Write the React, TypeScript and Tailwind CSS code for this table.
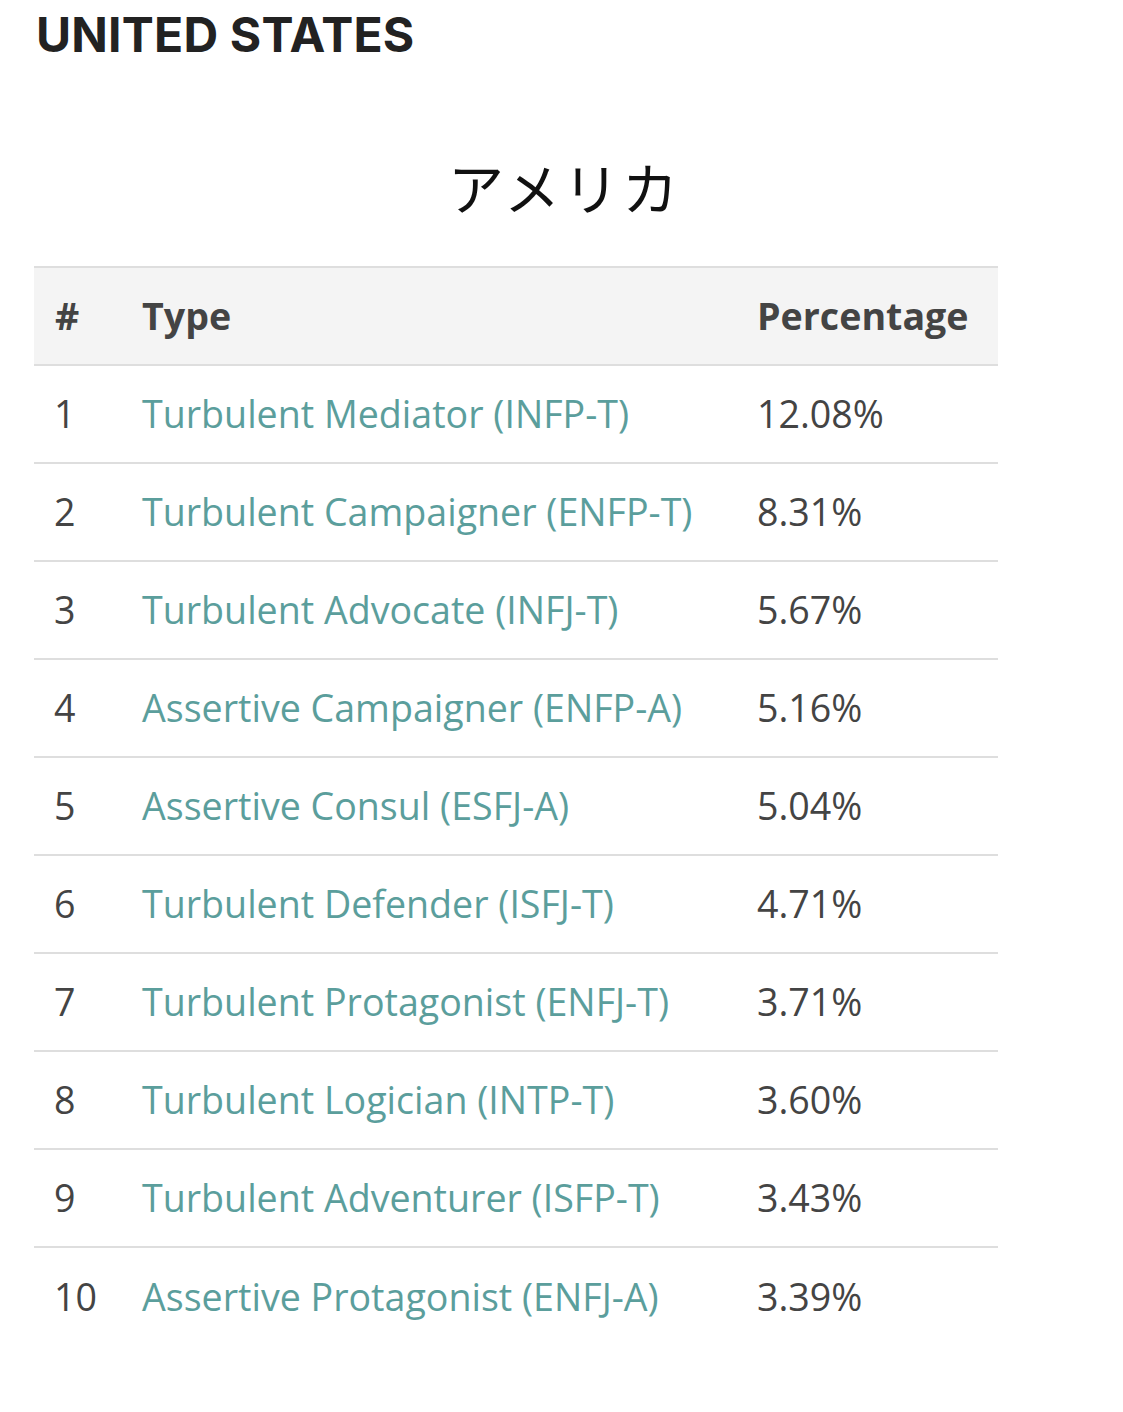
import React from "react";

const rows: [string, string][] = [
  ["Turbulent Mediator (INFP-T)", "12.08%"],
  ["Turbulent Campaigner (ENFP-T)", "8.31%"],
  ["Turbulent Advocate (INFJ-T)", "5.67%"],
  ["Assertive Campaigner (ENFP-A)", "5.16%"],
  ["Assertive Consul (ESFJ-A)", "5.04%"],
  ["Turbulent Defender (ISFJ-T)", "4.71%"],
  ["Turbulent Protagonist (ENFJ-T)", "3.71%"],
  ["Turbulent Logician (INTP-T)", "3.60%"],
  ["Turbulent Adventurer (ISFP-T)", "3.43%"],
  ["Assertive Protagonist (ENFJ-A)", "3.39%"],
];

export default function App() {
  return (
    <div className="w-[1123px] h-[1412px] bg-white overflow-hidden">
      <h1 className="pl-[36px] pt-[9px] text-[48px] leading-[52px] font-bold text-[#222] tracking-[0.2px] font-['Inter','Liberation_Sans',sans-serif]">
        UNITED STATES
      </h1>
      <div className="mt-[93px] pl-[6px] text-center text-[56px] leading-[64px] text-[#111] font-['Noto_Sans_CJK_JP','Noto_Sans',sans-serif] tracking-[3px]">
        アメリカ
      </div>
      <div className="mt-[48px] ml-[34px] w-[964px] font-['Open_Sans','Liberation_Sans',sans-serif] text-[37.6px]">
        <div className="flex items-center h-[100px] bg-[#f4f4f4] border-y-2 border-[#dedede] font-bold text-[#444]">
          <div className="w-[108px] pl-[21px]">#</div>
          <div className="w-[615px]">Type</div>
          <div className="flex-1">Percentage</div>
        </div>
        {rows.map(([t, p], i) => (
          <div
            key={i}
            className={
              "flex items-center h-[98px] text-[#444] " +
              (i < rows.length - 1 ? "border-b-2 border-[#dedede]" : "")
            }
          >
            <div className="w-[108px] pl-[20px]">{i + 1}</div>
            <div className="w-[615px] text-[#5b9e9c]">{t}</div>
            <div className="flex-1">{p}</div>
          </div>
        ))}
      </div>
    </div>
  );
}
